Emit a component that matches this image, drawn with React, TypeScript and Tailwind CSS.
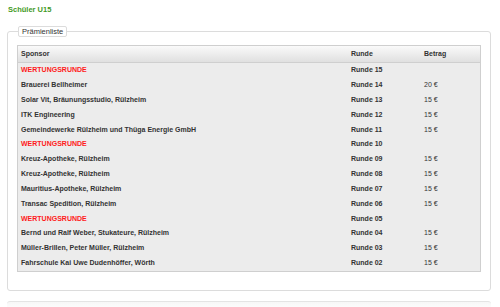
import React from "react";

type Row = { sponsor: string; runde: string; betrag: string; wertung?: boolean };

const rows: Row[] = [
  { sponsor: "WERTUNGSRUNDE", runde: "Runde 15", betrag: "", wertung: true },
  { sponsor: "Brauerei Bellheimer", runde: "Runde 14", betrag: "20 €" },
  { sponsor: "Solar Vit, Bräunungsstudio, Rülzheim", runde: "Runde 13", betrag: "15 €" },
  { sponsor: "ITK Engineering", runde: "Runde 12", betrag: "15 €" },
  { sponsor: "Gemeindewerke Rülzheim und Thüga Energie GmbH", runde: "Runde 11", betrag: "15 €" },
  { sponsor: "WERTUNGSRUNDE", runde: "Runde 10", betrag: "", wertung: true },
  { sponsor: "Kreuz-Apotheke, Rülzheim", runde: "Runde 09", betrag: "15 €" },
  { sponsor: "Kreuz-Apotheke, Rülzheim", runde: "Runde 08", betrag: "15 €" },
  { sponsor: "Mauritius-Apotheke, Rülzheim", runde: "Runde 07", betrag: "15 €" },
  { sponsor: "Transac Spedition, Rülzheim", runde: "Runde 06", betrag: "15 €" },
  { sponsor: "WERTUNGSRUNDE", runde: "Runde 05", betrag: "", wertung: true },
  { sponsor: "Bernd und Ralf Weber, Stukateure, Rülzheim", runde: "Runde 04", betrag: "15 €" },
  { sponsor: "Müller-Brillen, Peter Müller, Rülzheim", runde: "Runde 03", betrag: "15 €" },
  { sponsor: "Fahrschule Kai Uwe Dudenhöffer, Wörth", runde: "Runde 02", betrag: "15 €" },
];

export default function App() {
  return (
    <div className="w-[500px] h-[307px] bg-white overflow-hidden font-['Liberation_Sans',Arial,sans-serif] text-[#333]">
      <div className="h-[26px] pl-[8px] pt-[5px] text-[7.5px] leading-[10px] font-bold text-[#3f9a1e]">
        Schüler U15
      </div>
      <fieldset className="ml-[7px] w-[484px] border border-[#dcdcdc] rounded-[3px] px-[9px] pb-[18px] pt-[8px]">
        <legend className="ml-[1px] px-[3px] h-[11px] leading-[10px] text-[7.5px] text-[#333] border border-[#dcdcdc] rounded-[2px] bg-white">
          Prämienliste
        </legend>
        <div className="border border-[#cfcfcf] bg-[#ececec]">
          <div className="grid grid-cols-[330px_73px_1fr] h-[17px] items-center bg-gradient-to-b from-[#fafafa] to-[#e0e0e0] border-b border-[#cfcfcf] text-[7px] font-bold text-[#333]">
            <div className="pl-[3px]">Sponsor</div>
            <div className="pl-[3px]">Runde</div>
            <div className="pl-[3px]">Betrag</div>
          </div>
          {rows.map((r, i) => (
            <div key={i} className="grid grid-cols-[330px_73px_1fr] h-[14.85px] items-center text-[7px] font-bold">
              <div className={r.wertung ? "pl-[3px] text-[#ff1a1a]" : "pl-[3px] text-[#333]"}>{r.sponsor}</div>
              <div className="pl-[3px] text-[#333]">{r.runde}</div>
              <div className="pl-[3px] text-[#333] font-normal">{r.betrag}</div>
            </div>
          ))}
        </div>
      </fieldset>
      <div className="ml-[7px] mt-[10px] w-[484px] h-[10px] border-t border-[#e4e4e4] rounded-t-[3px] bg-gradient-to-b from-[#f7f7f7] to-white" />
    </div>
  );
}
